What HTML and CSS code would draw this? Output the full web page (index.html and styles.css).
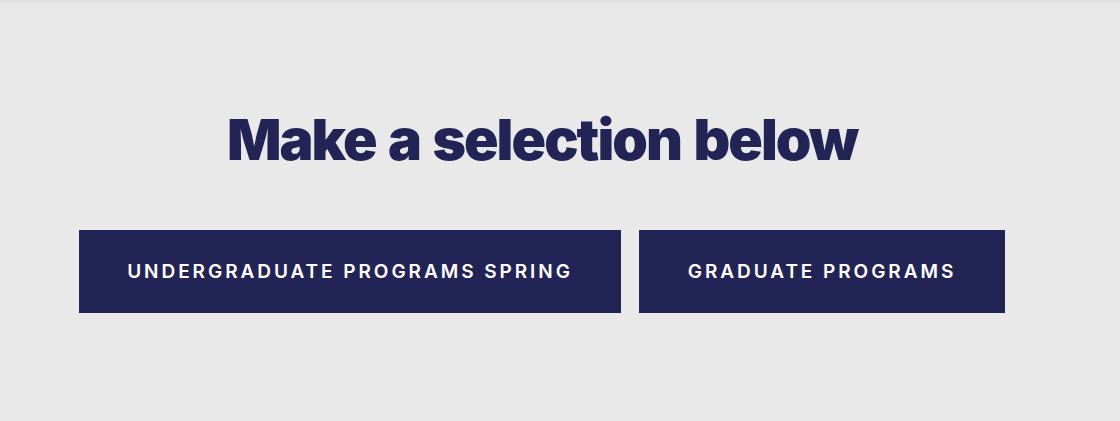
FILE: index.html
```html
<!DOCTYPE html>
<html lang="en">
<head>
<meta charset="utf-8">
<title>Make a selection below</title>
<link rel="stylesheet" href="styles.css">
</head>
<body>
<main class="page">
  <section class="content">
    <h1 class="title">Make a selection below</h1>
    <div class="buttons">
      <a class="btn btn-wide" href="#">UNDERGRADUATE PROGRAMS SPRING</a>
      <a class="btn btn-narrow" href="#">GRADUATE PROGRAMS</a>
    </div>
  </section>
</main>
</body>
</html>
```
FILE: styles.css
```css
html, body {
  margin: 0;
  padding: 0;
}
body {
  background: #e9e9e9;
  height: 421px;
  overflow: hidden;
  font-family: "Inter", "Liberation Sans", sans-serif;
}
.page {
  height: 421px;
  background: linear-gradient(to bottom, #dfdfdf 0px, #e5e5e5 3px, #e9e9e9 7px, #e9e9e9 100%);
}
.content {
  width: 926px;
  margin-left: 79px;
  padding-top: 111px;
  display: flex;
  flex-direction: column;
  align-items: center;
}
.title {
  margin: 0;
  font-size: 57px;
  line-height: 58px;
  font-weight: 900;
  color: #222456;
  letter-spacing: -1.95px;
  word-spacing: 3px;
}
.buttons {
  margin-top: 61px;
  display: flex;
  gap: 18px;
  align-self: stretch;
}
.btn {
  height: 83px;
  box-sizing: border-box;
  padding: 0 40px;
  display: flex;
  align-items: center;
  justify-content: center;
  background: #222456;
  color: #ffffff;
  text-decoration: none;
  font-size: 19px;
  font-weight: 600;
  letter-spacing: 2.95px;
}
.btn-wide {
  width: 542px;
}
.btn-narrow {
  width: 366px;
}
```
